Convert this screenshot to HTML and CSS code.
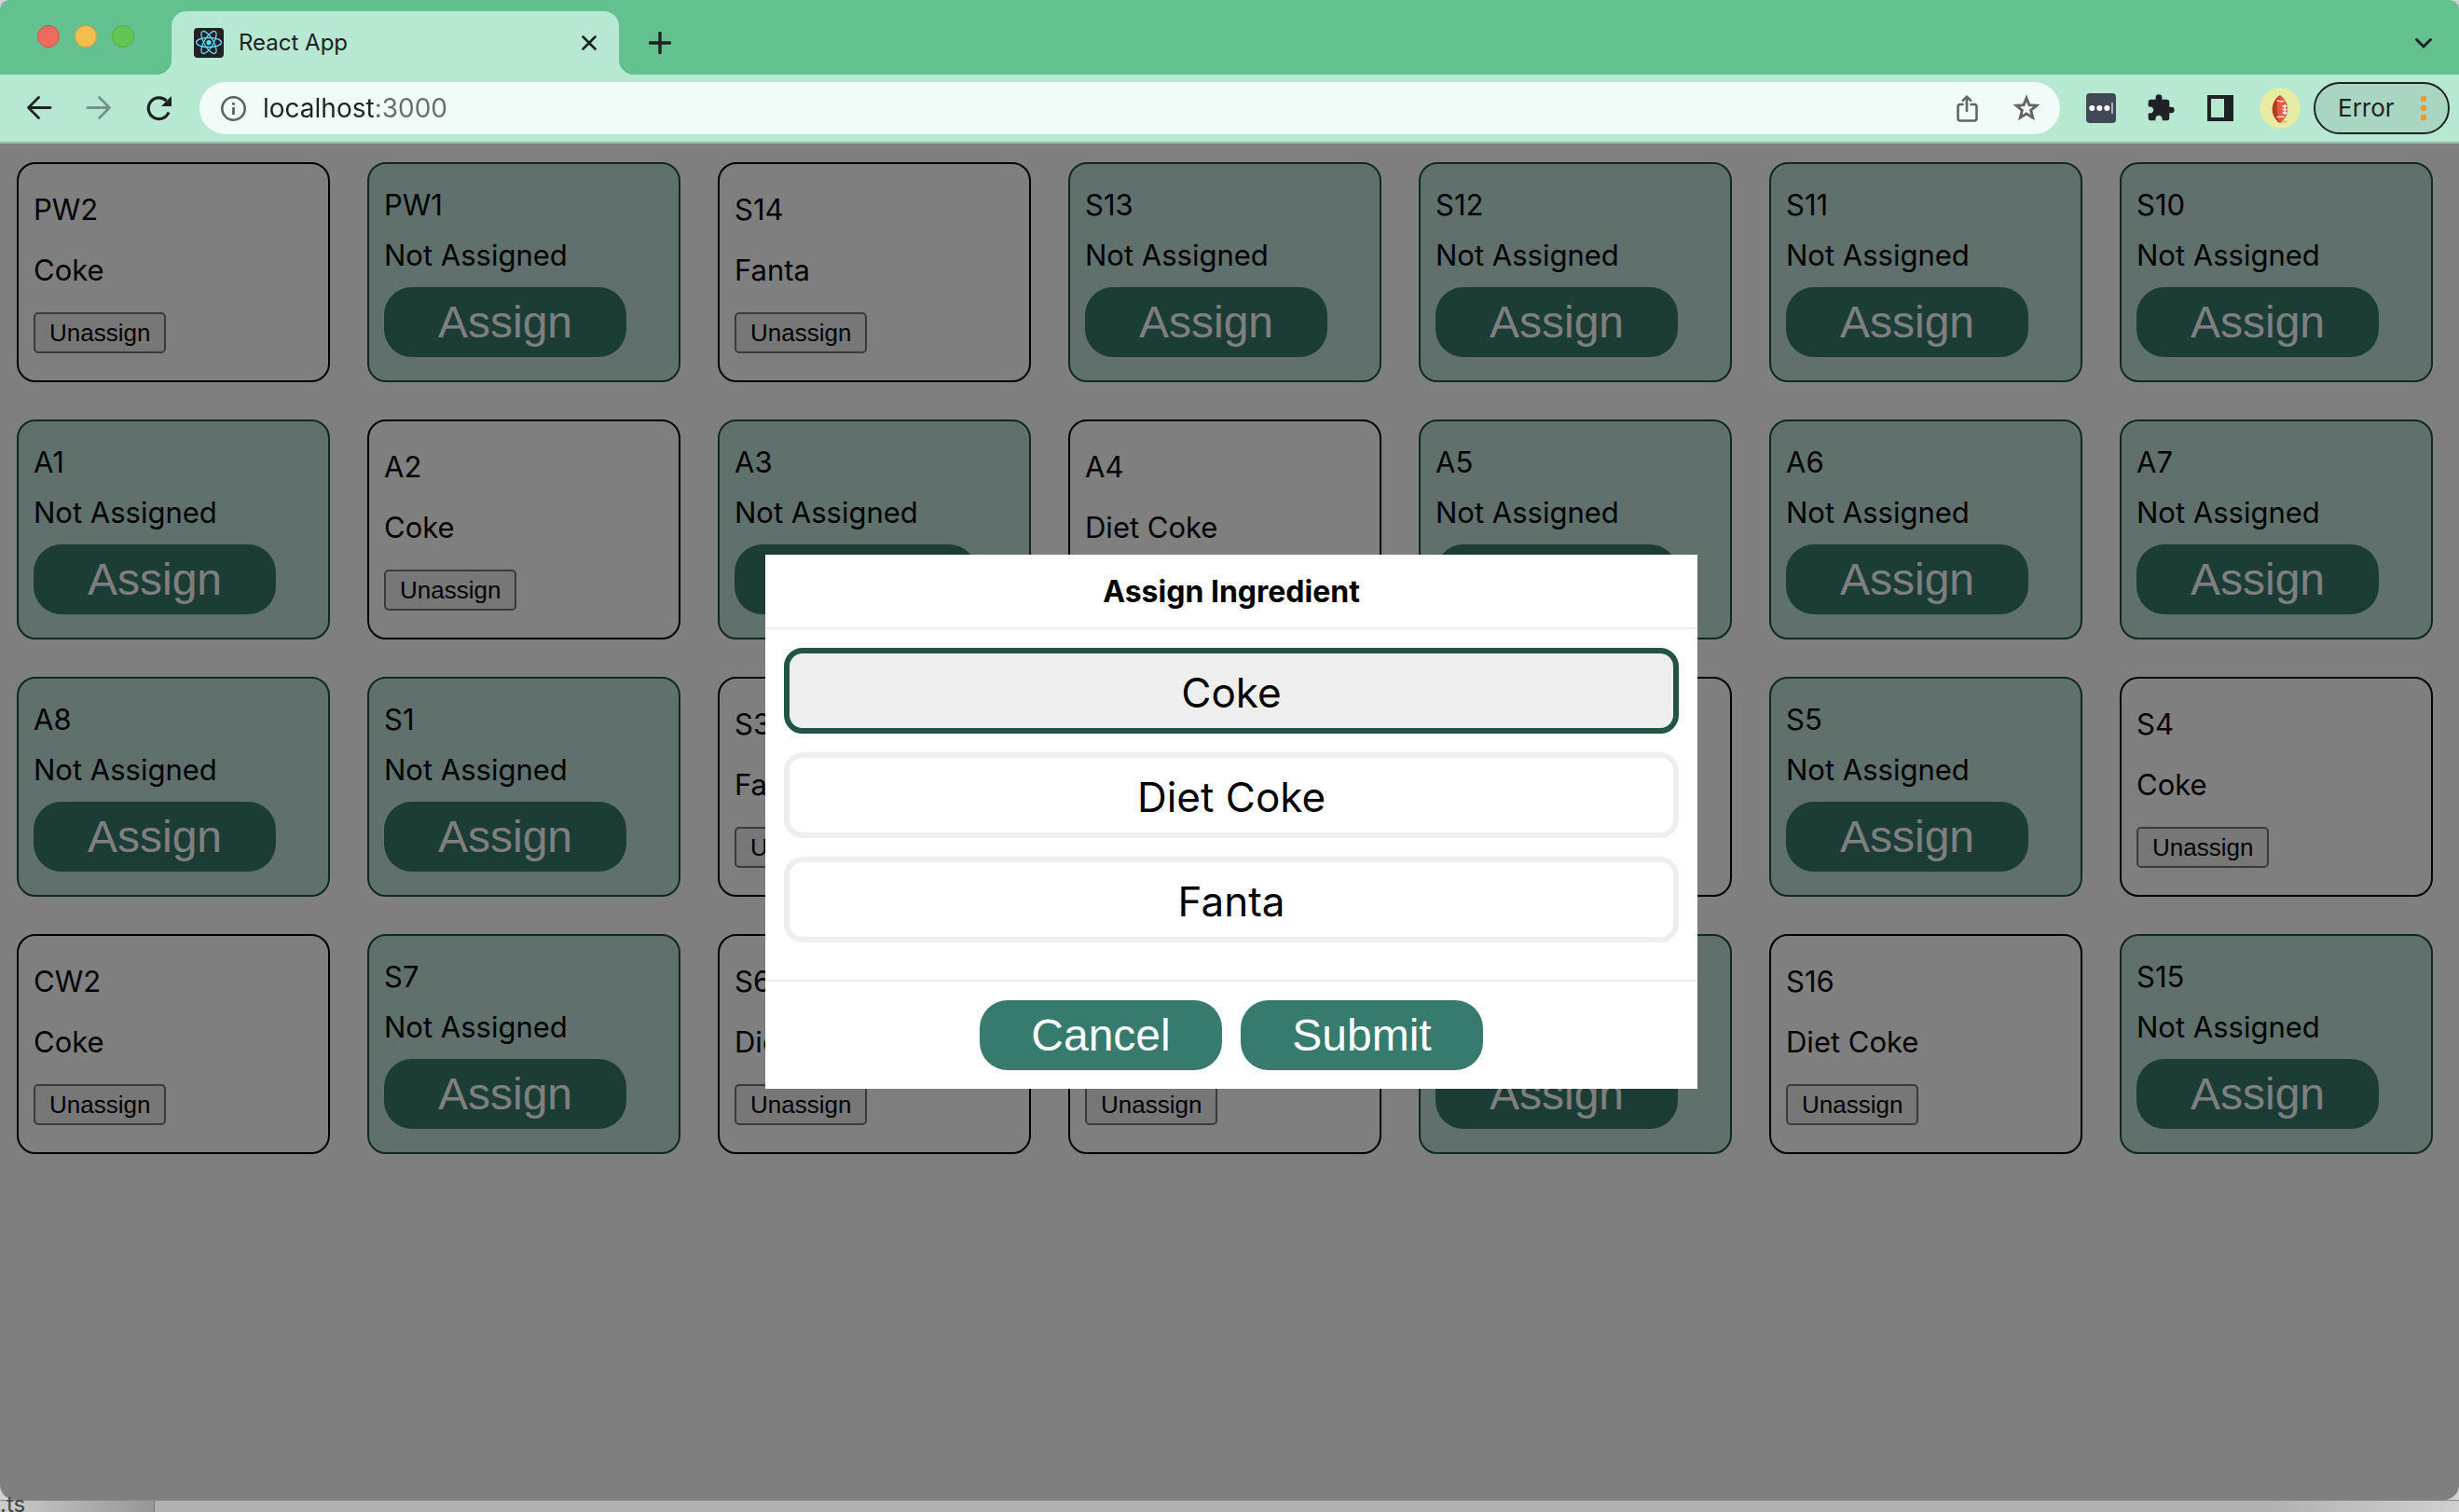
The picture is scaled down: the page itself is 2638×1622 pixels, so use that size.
FILE: index.html
```html
<!DOCTYPE html>
<html lang="en">
<head>
<meta charset="utf-8">
<title>React App</title>
<link rel="stylesheet" href="styles.css">
</head>
<body>
<div class="window">
  <header class="tabstrip">
    <div class="lights">
      <span class="light light-close"></span>
      <span class="light light-min"></span>
      <span class="light light-max"></span>
    </div>
    <div class="tab">
      <svg class="favicon" viewBox="0 0 32 32" aria-hidden="true">
        <rect width="32" height="32" rx="4" fill="#222"/>
        <g fill="none" stroke="#61dafb" stroke-width="1.3">
          <ellipse cx="16" cy="15.500" rx="13.500" ry="5"/>
          <ellipse cx="16" cy="15.500" rx="13.500" ry="5" transform="rotate(60 16 15.5)"/>
          <ellipse cx="16" cy="15.500" rx="13.500" ry="5" transform="rotate(120 16 15.5)"/>
        </g>
        <circle cx="16" cy="15.500" r="2.600" fill="#61dafb"/>
      </svg>
      <span class="tab-title">React App</span>
      <button class="icon-btn" aria-label="Close tab">
        <svg width="16" height="16" viewBox="0 0 16 16"><path d="M1.500 1.500l13 13M14.500 1.500l-13 13" stroke="#202124" stroke-width="2.600" stroke-linecap="round"/></svg>
      </button>
    </div>
    <button class="icon-btn new-tab" aria-label="New tab">
      <svg width="24" height="24" viewBox="0 0 24 24"><path d="M12 1.500v21M1.500 12h21" stroke="#202124" stroke-width="3.400" stroke-linecap="round"/></svg>
    </button>
    <button class="icon-btn tab-search" aria-label="Search tabs">
      <svg width="20" height="20" viewBox="0 0 20 20" fill="none"><path d="M2.500 6.500l7.500 7.500 7.500-7.500" stroke="#202124" stroke-width="3" stroke-linecap="round"/></svg>
    </button>
  </header>

  <nav class="toolbar">
    <div class="group">
      <button class="icon-btn" aria-label="Back">
        <svg width="32" height="32" viewBox="0 0 32 32" fill="none" stroke="#202124" stroke-width="2.800" stroke-linecap="round" stroke-linejoin="round"><path d="M28 15.500H5M15.500 4.500L4.500 15.500 15.500 26.500"/></svg>
      </button>
      <button class="icon-btn" aria-label="Forward">
        <svg width="32" height="32" viewBox="0 0 32 32" fill="none" stroke="#739383" stroke-width="2.800" stroke-linecap="round" stroke-linejoin="round"><path d="M4 15.500h23M16.500 4.500L27.500 15.500 16.500 26.500"/></svg>
      </button>
      <button class="icon-btn" aria-label="Reload">
        <svg width="32" height="32" viewBox="0 0 32 32" fill="none"><path d="M27 20.500A11.300 11.300 0 1 1 24.500 8.200" stroke="#202124" stroke-width="3.200"/><path d="M30 3v11h-11z" fill="#202124"/></svg>
      </button>
    </div>
    <div class="omnibox">
      <svg width="28" height="28" viewBox="0 0 28 28" fill="none" aria-hidden="true"><circle cx="14.500" cy="14.500" r="12.200" stroke="#5f6368" stroke-width="2.600"/><path d="M14.500 13v8" stroke="#5f6368" stroke-width="2.800"/><path d="M14.500 8v2.800" stroke="#5f6368" stroke-width="2.800"/></svg>
      <input class="url" type="text" aria-label="Address" value="localhost:3000">
      <button class="icon-btn" aria-label="Share">
        <svg width="32" height="32" viewBox="0 0 32 32" fill="none" stroke="#636664" stroke-width="2.600" stroke-linecap="round" stroke-linejoin="round"><path d="M16 19V4M11.800 7.800L16 3.600 20.200 7.800M11.500 12H9a2.500 2.500 0 0 0-2.500 2.500V27A2.500 2.500 0 0 0 9 29.500H24A2.500 2.500 0 0 0 26.500 27V14.500A2.500 2.500 0 0 0 24 12H20.500"/></svg>
      </button>
      <button class="icon-btn" aria-label="Bookmark this page">
        <svg width="32" height="32" viewBox="0 0 32 32" fill="none"><path d="M16 5.200l2.900 7.400 8 .6-6.200 5.100 2 7.900L16 22 9.300 26.200l2-7.900-6.200-5.100 8-.6z" stroke="#636664" stroke-width="2.900"/></svg>
      </button>
    </div>
    <div class="group">
      <button class="icon-btn" aria-label="Password manager">
        <svg width="32" height="32" viewBox="0 0 32 32"><rect width="32" height="32" rx="4" fill="#414a54"/><g fill="#fff"><circle cx="6.300" cy="16" r="3"/><circle cx="14.300" cy="16" r="3"/><circle cx="22.300" cy="16" r="3"/></g><path d="M28 10v12" stroke="#c9ccd0" stroke-width="1.600"/></svg>
      </button>
      <button class="icon-btn" aria-label="Extensions">
        <svg width="32" height="32" viewBox="0 0 24 24"><path fill="#202124" d="M20.500 11H19V7c0-1.100-.9-2-2-2h-4V3.500a2.500 2.500 0 0 0-5 0V5H4c-1.100 0-1.990.9-1.990 2v3.800H3.500c1.490 0 2.700 1.210 2.700 2.700s-1.210 2.700-2.700 2.700H2V20c0 1.100.9 2 2 2h3.800v-1.500c0-1.490 1.210-2.700 2.700-2.700s2.700 1.210 2.700 2.700V22H17c1.100 0 2-.9 2-2v-4h1.500a2.500 2.500 0 0 0 0-5z"/></svg>
      </button>
      <button class="icon-btn" aria-label="Side panel">
        <svg width="32" height="32" viewBox="0 0 32 32"><path fill="#202124" fill-rule="evenodd" d="M2 2h28v28H2zM6 6v20h14V6z"/></svg>
      </button>
    </div>
    <button class="icon-btn avatar" aria-label="Profile">
      <svg width="44" height="44" viewBox="0 0 44 44"><circle cx="22" cy="22" r="22" fill="#e6eca4"/><ellipse cx="24" cy="36.500" rx="6" ry="1.800" fill="#d3cf85"/><path d="M22 8C33 16 33 30 22 38 11 30 11 16 22 8z" fill="#e35b3d"/><path d="M22 8C11 16 11 30 22 38 17.500 30 17.500 16 22 8z" fill="#b53a1c"/><path d="M18.500 13.500q4 2.500 8 .5M18.500 32q4-1.500 8-.5M27 18v11M24.500 20h5M24.500 23.500h5M24.500 27h5" stroke="#fff" stroke-width="1.300" fill="none"/></svg>
    </button>
    <button class="error-btn">Error
      <svg width="8" height="28" viewBox="0 0 8 28" aria-hidden="true"><g fill="#e99a33"><circle cx="4" cy="4" r="3.200"/><circle cx="4" cy="14" r="3.200"/><circle cx="4" cy="24" r="3.200"/></g></svg>
    </button>
  </nav>

  <main class="page">
    <div class="slots">
      <section class="card"><p>PW2</p><p>Coke</p><button class="unassign">Unassign</button></section>
      <section class="card card-empty"><p>PW1</p><p>Not Assigned</p><button class="pill">Assign</button></section>
      <section class="card"><p>S14</p><p>Fanta</p><button class="unassign">Unassign</button></section>
      <section class="card card-empty"><p>S13</p><p>Not Assigned</p><button class="pill">Assign</button></section>
      <section class="card card-empty"><p>S12</p><p>Not Assigned</p><button class="pill">Assign</button></section>
      <section class="card card-empty"><p>S11</p><p>Not Assigned</p><button class="pill">Assign</button></section>
      <section class="card card-empty"><p>S10</p><p>Not Assigned</p><button class="pill">Assign</button></section>

      <section class="card card-empty"><p>A1</p><p>Not Assigned</p><button class="pill">Assign</button></section>
      <section class="card"><p>A2</p><p>Coke</p><button class="unassign">Unassign</button></section>
      <section class="card card-empty"><p>A3</p><p>Not Assigned</p><button class="pill">Assign</button></section>
      <section class="card"><p>A4</p><p>Diet Coke</p><button class="unassign">Unassign</button></section>
      <section class="card card-empty"><p>A5</p><p>Not Assigned</p><button class="pill">Assign</button></section>
      <section class="card card-empty"><p>A6</p><p>Not Assigned</p><button class="pill">Assign</button></section>
      <section class="card card-empty"><p>A7</p><p>Not Assigned</p><button class="pill">Assign</button></section>

      <section class="card card-empty"><p>A8</p><p>Not Assigned</p><button class="pill">Assign</button></section>
      <section class="card card-empty"><p>S1</p><p>Not Assigned</p><button class="pill">Assign</button></section>
      <section class="card"><p>S3</p><p>Fanta</p><button class="unassign">Unassign</button></section>
      <section class="card"><p>S2</p><p>Coke</p><button class="unassign">Unassign</button></section>
      <section class="card"><p>CW1</p><p>Coke</p><button class="unassign">Unassign</button></section>
      <section class="card card-empty"><p>S5</p><p>Not Assigned</p><button class="pill">Assign</button></section>
      <section class="card"><p>S4</p><p>Coke</p><button class="unassign">Unassign</button></section>

      <section class="card"><p>CW2</p><p>Coke</p><button class="unassign">Unassign</button></section>
      <section class="card card-empty"><p>S7</p><p>Not Assigned</p><button class="pill">Assign</button></section>
      <section class="card"><p>S6</p><p>Diet Coke</p><button class="unassign">Unassign</button></section>
      <section class="card"><p>S9</p><p>Fanta</p><button class="unassign">Unassign</button></section>
      <section class="card card-empty"><p>S8</p><p>Not Assigned</p><button class="pill">Assign</button></section>
      <section class="card"><p>S16</p><p>Diet Coke</p><button class="unassign">Unassign</button></section>
      <section class="card card-empty"><p>S15</p><p>Not Assigned</p><button class="pill">Assign</button></section>
    </div>

    <div class="overlay">
      <div class="modal" role="dialog" aria-labelledby="modal-title">
        <h2 class="modal-title" id="modal-title">Assign Ingredient</h2>
        <div class="options">
          <button class="option option-selected" aria-pressed="true">Coke</button>
          <button class="option" aria-pressed="false">Diet Coke</button>
          <button class="option" aria-pressed="false">Fanta</button>
        </div>
        <div class="modal-footer">
          <button class="pill">Cancel</button>
          <button class="pill">Submit</button>
        </div>
      </div>
    </div>
  </main>
</div>
<footer class="desktop">
  <div class="desktop-side"><span class="file-name">.ts</span></div>
</footer>
</body>
</html>
```
FILE: styles.css
```css
* {
  box-sizing: border-box;
}

body {
  margin: 0;
  min-height: 100vh;
  display: flex;
  flex-direction: column;
  overflow: hidden;
  background: #d0d0d0;
  color: #000;
  font-family: Inter, "Liberation Sans", sans-serif;
}

button {
  font-family: "Liberation Sans", Arial, sans-serif;
}

p,
h2 {
  margin: 0;
}

svg {
  display: block;
  flex: none;
}

.icon-btn {
  display: block;
  flex: none;
  padding: 0;
  border: 0;
  background: none;
}

.window {
  flex: 1;
  display: flex;
  flex-direction: column;
  border-radius: 10px 10px 16px 16px;
  overflow: hidden;
}

/* Tab strip */
.tabstrip {
  display: flex;
  align-items: flex-end;
  height: 80px;
  padding-right: 28px;
  background: #63c190;
}

.lights {
  display: flex;
  gap: 16px;
  width: 184px;
  padding: 0 0 29px 40px;
}

.light {
  width: 24px;
  height: 24px;
  border: 1px solid;
  border-radius: 50%;
}

.light-close {
  background: #ed6a5e;
  border-color: #d05347;
}

.light-min {
  background: #f5bf4f;
  border-color: #d6a243;
}

.light-max {
  background: #61c554;
  border-color: #4fab43;
}

.tab {
  position: relative;
  display: flex;
  align-items: center;
  gap: 16px;
  width: 480px;
  height: 68px;
  padding: 0 24px;
  border-radius: 16px 16px 0 0;
  background: #b7e8d1;
}

/* flared feet on either side of the active tab */
.tab::before,
.tab::after {
  content: "";
  position: absolute;
  bottom: 0;
  width: 16px;
  height: 16px;
}

.tab::before {
  right: 100%;
  background: radial-gradient(circle at 0 0, transparent 16px, #b7e8d1 16px);
}

.tab::after {
  left: 100%;
  background: radial-gradient(circle at 100% 0, transparent 16px, #b7e8d1 16px);
}

.favicon {
  width: 32px;
  height: 32px;
}

.tab-title {
  flex: 1;
  font-size: 24px;
  line-height: 32px;
  color: #202124;
}

.new-tab {
  margin: 0 auto 22px 32px;
}

.tab-search {
  margin-bottom: 24px;
}

/* Toolbar */
.toolbar {
  display: flex;
  align-items: center;
  height: 74px;
  padding: 0 10px 0 26px;
  border-bottom: 2px solid #92baa7;
  background: #b7e8d1;
}

.group {
  display: flex;
  gap: 32px;
}

.omnibox {
  display: flex;
  flex: 1;
  align-items: center;
  gap: 32px;
  height: 56px;
  margin: 0 28px;
  padding: 0 20px 0 22px;
  border-radius: 28px;
  background: #f1fbf7;
}

.url {
  flex: 1;
  min-width: 0;
  height: 40px;
  margin-left: -14px;
  padding: 0;
  border: 0;
  outline: 0;
  font: 28px/40px Inter, "Liberation Sans", sans-serif;
  color: transparent;
  /* host in dark, port in grey */
  background: linear-gradient(90deg, #202124 121px, #686d6b 121px);
  -webkit-background-clip: text;
  background-clip: text;
}

.avatar {
  margin: 0 14px 0 26px;
}

.error-btn {
  display: flex;
  align-items: center;
  justify-content: space-between;
  width: 146px;
  height: 56px;
  padding: 0 22px 0 24px;
  border: 2px solid #202124;
  border-radius: 28px;
  background: #a8d6c1;
  font: 26px/32px Inter, "Liberation Sans", sans-serif;
  color: #202124;
}

/* App page */
.page {
  position: relative;
  flex: 1;
  background: #fff;
}

.slots {
  display: grid;
  grid-template-columns: repeat(auto-fill, minmax(320px, 1fr));
  gap: 40px;
  padding: 20px 28px 20px 18px;
}

.card {
  display: flex;
  flex-direction: column;
  align-items: flex-start;
  gap: 25px;
  min-height: 236px;
  padding: 29px 16px;
  border: 2px solid #000;
  border-radius: 20px;
  font-size: 31px;
  line-height: 40px;
}

.card-empty {
  gap: 14px;
  padding: 24px 16px;
  border-color: #204f44;
  background: #bfe0da;
}

.unassign {
  height: 44px;
  padding: 0 15px;
  border: 2px solid #767676;
  border-radius: 5px;
  background: #efefef;
  font-size: 26px;
  color: #000;
}

.pill {
  width: 260px;
  height: 75px;
  padding: 0;
  border: 0;
  border-radius: 30px;
  background: #367b6d;
  font-size: 48px;
  color: #fff;
}

/* Assign dialog */
.overlay {
  position: absolute;
  inset: 0;
  display: grid;
  place-items: center;
  padding-left: 4px;
  background: rgba(0, 0, 0, 0.5);
}

.modal {
  width: 1000px;
  max-width: 100%;
  background: #fff;
}

.modal-title {
  padding: 21px 20px 19px;
  border-bottom: 2px solid #eee;
  font-size: 32px;
  font-weight: 700;
  line-height: 38px;
  text-align: center;
}

.options {
  display: flex;
  flex-direction: column;
  gap: 20px;
  padding: 20px 20px 40px;
}

.option {
  height: 92px;
  padding: 3px 0 0;
  border: 6px solid #eee;
  border-radius: 20px;
  background: #fff;
  font-family: Inter, "Liberation Sans", sans-serif;
  font-size: 44px;
  color: #000;
}

.option-selected {
  border-color: #225347;
  background: #eee;
}

.modal-footer {
  display: flex;
  justify-content: center;
  gap: 20px;
  padding: 20px;
  border-top: 2px solid #eee;
}

/* Sliver of the window behind */
.desktop {
  height: 13px;
  border-top: 1px solid #8a8a8a;
  background: linear-gradient(90deg, #b0b0b0 92%, #d0d0d0);
}

.desktop-side {
  position: relative;
  width: 166px;
  height: 100%;
  border-right: 1px solid #777;
  background: linear-gradient(90deg, #ccc, #b0b0b0 50%, #969696);
}

.file-name {
  position: absolute;
  left: 0;
  bottom: -6px;
  font-size: 24px;
  line-height: 28px;
  color: #444;
}
```
